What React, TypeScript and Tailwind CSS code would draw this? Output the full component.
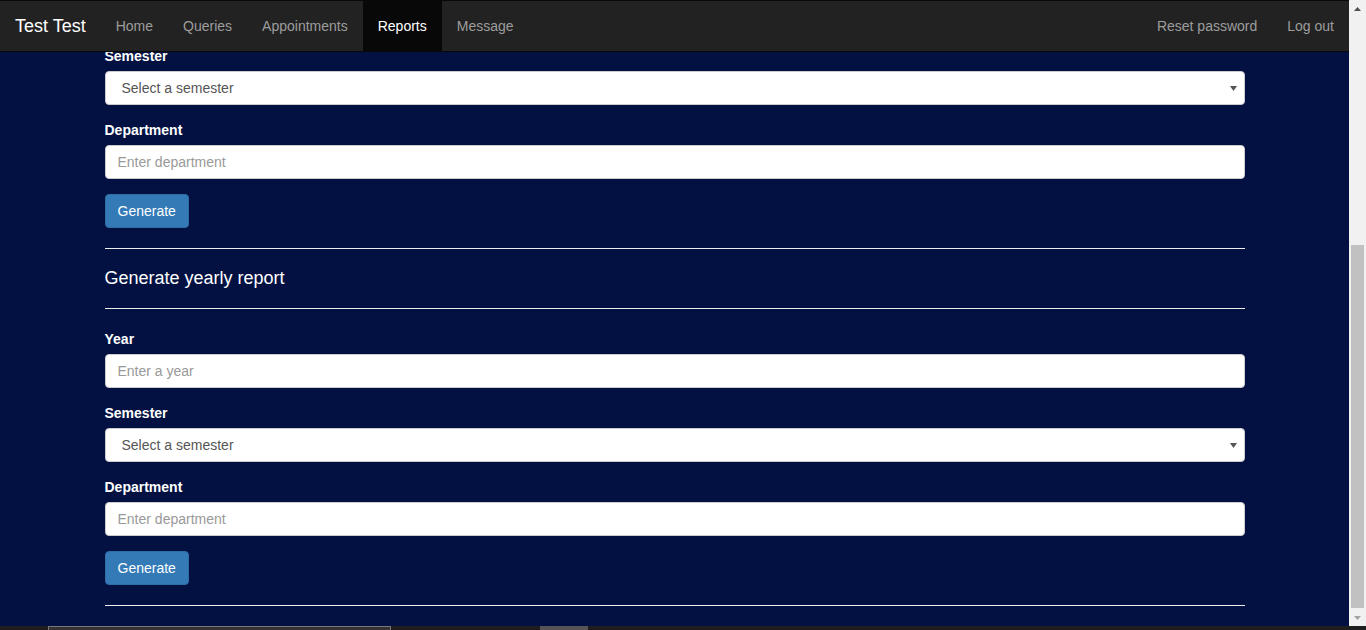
import React from 'react'

const navLinks = ['Home', 'Queries', 'Appointments', 'Reports', 'Message']

function Label({ children }: { children: React.ReactNode }) {
  return (
    <label className="block text-[14px] leading-[20px] font-bold text-white mb-[5px]">
      {children}
    </label>
  )
}

function TextInput({ placeholder }: { placeholder: string }) {
  return (
    <input
      type="text"
      placeholder={placeholder}
      className="block w-full h-[34px] px-[12px] py-[6px] text-[14px] leading-[20px] text-[#555] bg-white border border-[#ccc] rounded-[4px] placeholder:text-[#999] outline-none"
    />
  )
}

function SemesterSelect() {
  return (
    <div className="relative">
      <select
        defaultValue=""
        className="block w-full h-[34px] pl-[16px] pr-[24px] text-[14px] leading-[20px] text-[#555] bg-white border border-[#ccc] rounded-[4px] appearance-none outline-none"
      >
        <option value="">Select a semester</option>
        <option value="1">Semester 1</option>
        <option value="2">Semester 2</option>
      </select>
      <svg
        width="7"
        height="5"
        viewBox="0 0 7 5"
        className="absolute right-[8px] top-[15px] pointer-events-none"
      >
        <path d="M0 0 H7 L3.5 5 Z" fill="#555" />
      </svg>
    </div>
  )
}

function GenerateButton() {
  return (
    <button className="h-[34px] px-[12px] text-[14px] leading-[20px] text-white bg-[#337ab7] border border-[#2e6da4] rounded-[4px]">
      Generate
    </button>
  )
}

function Divider() {
  return <hr className="border-0 border-t border-[#eee] my-[20px]" />
}

export default function App() {
  return (
    <div className="w-[1366px] h-[630px] overflow-hidden flex flex-col bg-[#1e1e1e] font-['Liberation_Sans',Arial,sans-serif]">
      <div className="flex flex-1 min-h-0">
        {/* page */}
        <div className="flex-1 flex flex-col bg-[#021142] overflow-hidden">
          {/* Navbar */}
          <nav className="relative z-10 h-[52px] shrink-0 flex bg-[#222] border-t border-b border-[#080808]">
            <a className="px-[15px] py-[15px] h-[50px] text-[18px] leading-[20px] text-white">
              Test Test
            </a>
            <ul className="flex">
              {navLinks.map((link) => (
                <li key={link}>
                  <a
                    className={`block px-[15px] py-[15px] h-[50px] text-[14px] leading-[20px] ${
                      link === 'Reports' ? 'bg-[#080808] text-white' : 'text-[#9d9d9d]'
                    }`}
                  >
                    {link}
                  </a>
                </li>
              ))}
            </ul>
            <ul className="flex ml-auto">
              <li>
                <a className="block px-[15px] py-[15px] h-[50px] text-[14px] leading-[20px] text-[#9d9d9d]">
                  Reset password
                </a>
              </li>
              <li>
                <a className="block px-[15px] py-[15px] h-[50px] text-[14px] leading-[20px] text-[#9d9d9d]">
                  Log out
                </a>
              </li>
            </ul>
          </nav>

          {/* Content */}
          <main className="w-[1170px] mx-auto px-[15px] -mt-[6px]">
            <div className="mb-[15px]">
              <Label>Semester</Label>
              <SemesterSelect />
            </div>
            <div className="mb-[15px]">
              <Label>Department</Label>
              <TextInput placeholder="Enter department" />
            </div>
            <GenerateButton />

            <Divider />
            <div className="h-[39px] -my-[10px] flex items-center">
              <h4 className="text-[18px] leading-[20px] text-white -mt-[1px]">Generate yearly report</h4>
            </div>
            <Divider />

            <div className="mb-[15px]">
              <Label>Year</Label>
              <TextInput placeholder="Enter a year" />
            </div>
            <div className="mb-[15px]">
              <Label>Semester</Label>
              <SemesterSelect />
            </div>
            <div className="mb-[15px]">
              <Label>Department</Label>
              <TextInput placeholder="Enter department" />
            </div>
            <GenerateButton />
            <Divider />
          </main>
        </div>

        {/* Vertical scrollbar */}
        <div className="w-[17px] shrink-0 bg-[#f1f1f1] flex flex-col items-center">
          <div className="h-[17px] flex items-center justify-center">
            <svg width="7" height="4" viewBox="0 0 7 4">
              <path d="M0 4 L3.5 0 L7 4 Z" fill="#505050" />
            </svg>
          </div>
          <div className="flex-1 w-full px-[2px] flex flex-col">
            <div className="h-[228px]" />
            <div className="h-[363px] bg-[#c1c1c1]" />
          </div>
          <div className="h-[17px] flex items-center justify-center">
            <svg width="7" height="4" viewBox="0 0 7 4">
              <path d="M0 0 L7 0 L3.5 4 Z" fill="#a3a3a3" />
            </svg>
          </div>
        </div>
      </div>

      {/* Bottom strip */}
      <div className="h-[4px] shrink-0 flex bg-[#1e1e1e]">
        <div className="w-[48px]" />
        <div className="w-[343px] bg-[#333] border-t border-x border-[#777]" />
        <div className="w-[149px]" />
        <div className="w-[48px] bg-[#555]" />
      </div>
    </div>
  )
}
